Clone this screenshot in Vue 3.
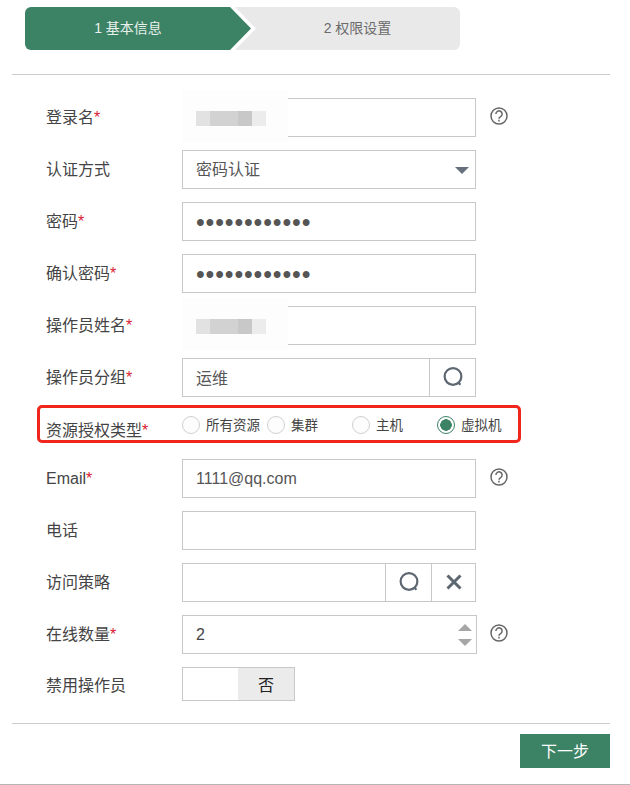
<script setup>
const radios = [
  { label: '所有资源', checked: false },
  { label: '集群', checked: false },
  { label: '主机', checked: false },
  { label: '虚拟机', checked: true },
]
</script>

<template>
  <div class="page">
    <div class="steps">
      <div class="step step-active"><span>1 基本信息</span></div>
      <div class="step step-next"><span>2 权限设置</span></div>
    </div>

    <div class="form">
      <div class="row">
        <label class="label">登录名<i>*</i></label>
        <div class="box">
          <span class="smear"></span>
          <span class="blur"></span>
        </div>
        <svg class="help" viewBox="0 0 18 18"><circle cx="9" cy="9" r="8" /><path d="M5.9 7a3.1 3.1 0 1 1 4.7 2.6c-1 .6-1.6 1.1-1.6 2.2" /><path d="M9 12.8v1.6" /></svg>
      </div>

      <div class="row">
        <label class="label">认证方式</label>
        <div class="box">
          <span class="val muted cjk">密码认证</span>
          <span class="caret"></span>
        </div>
      </div>

      <div class="row">
        <label class="label">密码<i>*</i></label>
        <div class="box"><span class="dots">••••••••••••</span></div>
      </div>

      <div class="row">
        <label class="label">确认密码<i>*</i></label>
        <div class="box"><span class="dots">••••••••••••</span></div>
      </div>

      <div class="row">
        <label class="label">操作员姓名<i>*</i></label>
        <div class="box">
          <span class="smear"></span>
          <span class="blur"></span>
        </div>
      </div>

      <div class="row">
        <label class="label">操作员分组<i>*</i></label>
        <div class="box">
          <span class="val muted grow cjk-low">运维</span>
          <span class="addon addon-search">
            <svg class="icon" viewBox="0 0 20 20"><circle cx="10" cy="9.5" r="7.6" /><path d="M15 15.2l1.8 1.8" /></svg>
          </span>
        </div>
      </div>

      <div class="row row-radio">
        <label class="label label-radio">资源授权类型<i>*</i></label>
        <div class="radios">
          <div v-for="r in radios" :key="r.label" class="radio">
            <span class="dot" :class="{ on: r.checked }"></span>
            <span class="radio-text">{{ r.label }}</span>
          </div>
        </div>
        <div class="red-box"></div>
      </div>

      <div class="row">
        <label class="label label-latin">Email<i>*</i></label>
        <div class="box"><span class="val muted">1111@qq.com</span></div>
        <svg class="help" viewBox="0 0 18 18"><circle cx="9" cy="9" r="8" /><path d="M5.9 7a3.1 3.1 0 1 1 4.7 2.6c-1 .6-1.6 1.1-1.6 2.2" /><path d="M9 12.8v1.6" /></svg>
      </div>

      <div class="row">
        <label class="label">电话</label>
        <div class="box"></div>
      </div>

      <div class="row">
        <label class="label">访问策略</label>
        <div class="box">
          <span class="grow"></span>
          <span class="addon addon-search">
            <svg class="icon" viewBox="0 0 20 20"><circle cx="10" cy="9.5" r="7.6" /><path d="M15 15.2l1.8 1.8" /></svg>
          </span>
          <span class="addon addon-close">
            <svg class="icon icon-x" viewBox="0 0 16 16"><path d="M1.5 1.5l13 13M14.5 1.5l-13 13" /></svg>
          </span>
        </div>
      </div>

      <div class="row">
        <label class="label">在线数量<i>*</i></label>
        <div class="box box-number">
          <span class="val grow">2</span>
          <span class="spin">
            <span class="up"></span>
            <span class="down"></span>
          </span>
        </div>
        <svg class="help help-number" viewBox="0 0 18 18"><circle cx="9" cy="9" r="8" /><path d="M5.9 7a3.1 3.1 0 1 1 4.7 2.6c-1 .6-1.6 1.1-1.6 2.2" /><path d="M9 12.8v1.6" /></svg>
      </div>

      <div class="row row-switch">
        <label class="label label-latin">禁用操作员</label>
        <div class="switch">
          <span class="switch-off"></span>
          <span class="switch-no">否</span>
        </div>
      </div>
    </div>

    <div class="footer">
      <button class="next"><span>下一步</span></button>
    </div>
  </div>
</template>

<style scoped>
.page {
  width: 630px;
  height: 785px;
  box-sizing: border-box;
  padding-top: 7px;
  border-bottom: 1px solid #b5b5b5;
  font-family: "Liberation Sans", "Noto Sans CJK SC", sans-serif;
  color: #555;
  background: #fff;
  overflow: hidden;
}

.steps {
  display: flex;
  width: 435px;
  height: 43px;
  margin-left: 25px;
  font-size: 14px;
}

.step {
  display: flex;
  align-items: center;
  justify-content: center;
}

.step span {
  margin-top: -4px;
}

.step-active {
  width: 226px;
  color: #e8f1ec;
  background: #3c8265;
  border-radius: 6px 0 0 6px;
  padding-right: 20px;
  box-sizing: border-box;
  clip-path: polygon(0 0, 205px 0, 226px 50%, 205px 100%, 0 100%);
  margin-right: -16px;
  position: relative;
  z-index: 1;
}

.step-next {
  flex: 1;
  color: #6b6b6b;
  background: #e9e9e9;
  border-radius: 0 6px 6px 0;
  padding-left: 20px;
  clip-path: polygon(0 0, 100% 0, 100% 100%, 0 100%, 21px 50%);
}

.form {
  margin: 24px 20px 0 12px;
  padding-top: 23px;
  border-top: 1px solid #ccc;
  border-bottom: 1px solid #ccc;
  height: 650px;
  box-sizing: border-box;
  width: 598px;
}

.row {
  display: flex;
  align-items: center;
  height: 39px;
  margin-bottom: 13px;
  position: relative;
}

.label {
  width: 170px;
  padding-left: 34px;
  padding-bottom: 4px;
  box-sizing: border-box;
  font-size: 16px;
  color: #444;
  flex-shrink: 0;
}

.label-latin {
  padding-bottom: 0;
}

.label i {
  color: #d9232e;
  font-style: normal;
}

.box {
  position: relative;
  display: flex;
  align-items: center;
  width: 294px;
  height: 39px;
  box-sizing: border-box;
  border: 1px solid #c8c8c8;
  background: #fff;
}

.val {
  padding-left: 13px;
  font-size: 16px;
  color: #444;
}

.cjk {
  padding-bottom: 3px;
}

.cjk-low {
  padding-bottom: 1px;
}

.muted {
  color: #555;
}

.grow {
  flex: 1;
}

.dots {
  padding-left: 13px;
  padding-top: 1px;
  font-size: 25px;
  letter-spacing: 0.85px;
  color: #555;
  line-height: 1;
}

.smear {
  position: absolute;
  left: -1px;
  top: -8px;
  width: 106px;
  height: 52px;
  background: #fdfdfd;
}

.blur {
  position: relative;
  margin-left: 13px;
  margin-top: 2px;
  width: 70px;
  height: 15px;
  background: linear-gradient(90deg, #e2e2e2 0 14px, #d2d2d2 14px 42px, #c8c8c8 42px 56px, #ececec 56px);
}

.caret {
  position: absolute;
  right: 6px;
  top: 16px;
  width: 0;
  height: 0;
  border-left: 7px solid transparent;
  border-right: 7px solid transparent;
  border-top: 7px solid #66707c;
}

.help {
  width: 18px;
  height: 18px;
  margin-left: 14px;
  fill: none;
  stroke: #666;
  stroke-width: 1.5;
  margin-top: -3px;
}

.help-number {
  margin-left: 13px;
}

.addon {
  display: flex;
  align-items: center;
  justify-content: center;
  height: 100%;
  border-left: 1px solid #c8c8c8;
  box-sizing: border-box;
}

.addon-search {
  width: 46px;
}

.addon-close {
  width: 44px;
}

.icon {
  width: 22px;
  height: 22px;
  fill: none;
  stroke: #5d6772;
  stroke-width: 2;
  margin-top: -2px;
}

.icon-x {
  width: 16px;
  height: 16px;
  stroke-width: 3;
}

.row-radio {
  height: 36px;
}

.label-radio {
  padding-top: 2px;
  padding-bottom: 0;
}

.radios {
  display: flex;
  align-items: center;
  margin-top: -7px;
}

.radio {
  display: flex;
  align-items: center;
  width: 85px;
  font-size: 13.5px;
  color: #444;
}

.dot {
  width: 18px;
  height: 18px;
  box-sizing: border-box;
  border: 1px solid #d0d0d0;
  border-radius: 50%;
  margin-right: 6px;
  flex-shrink: 0;
  background: #fdfdfd;
}

.dot.on {
  border-color: #3c8265;
  background: radial-gradient(circle, #3c8265 0 5.5px, #fff 6px);
}

.radio-text {
  white-space: nowrap;
  margin-top: -2px;
}

.red-box {
  position: absolute;
  left: 25px;
  top: -5px;
  width: 484px;
  height: 38px;
  box-sizing: border-box;
  border: 3px solid #f0251c;
  border-radius: 5px;
}

.box-number {
  width: 295px;
}

.spin {
  display: flex;
  flex-direction: column;
  gap: 8px;
  margin-right: 4px;
}

.up,
.down {
  width: 0;
  height: 0;
  border-left: 7px solid transparent;
  border-right: 7px solid transparent;
}

.up {
  border-bottom: 7px solid #a6a6a6;
}

.down {
  border-top: 7px solid #a6a6a6;
}

.row-switch {
  height: 34px;
  margin-bottom: 0;
}

.switch {
  display: flex;
  width: 113px;
  height: 34px;
  box-sizing: border-box;
  border: 1px solid #c8c8c8;
}

.switch-off {
  width: 55px;
  background: #fff;
}

.switch-no {
  flex: 1;
  display: flex;
  align-items: center;
  justify-content: center;
  background: #ebebeb;
  font-size: 16px;
  color: #222;
}

.footer {
  display: flex;
  justify-content: flex-end;
  padding: 10px 20px 0 0;
}

.next {
  width: 90px;
  height: 34px;
  border: none;
  background: #3c8265;
  color: #fff;
  font-family: inherit;
  font-size: 16px;
  padding: 0 0 2px;
}
</style>

<style>
html,
body {
  margin: 0;
  background: #fff;
}
</style>
